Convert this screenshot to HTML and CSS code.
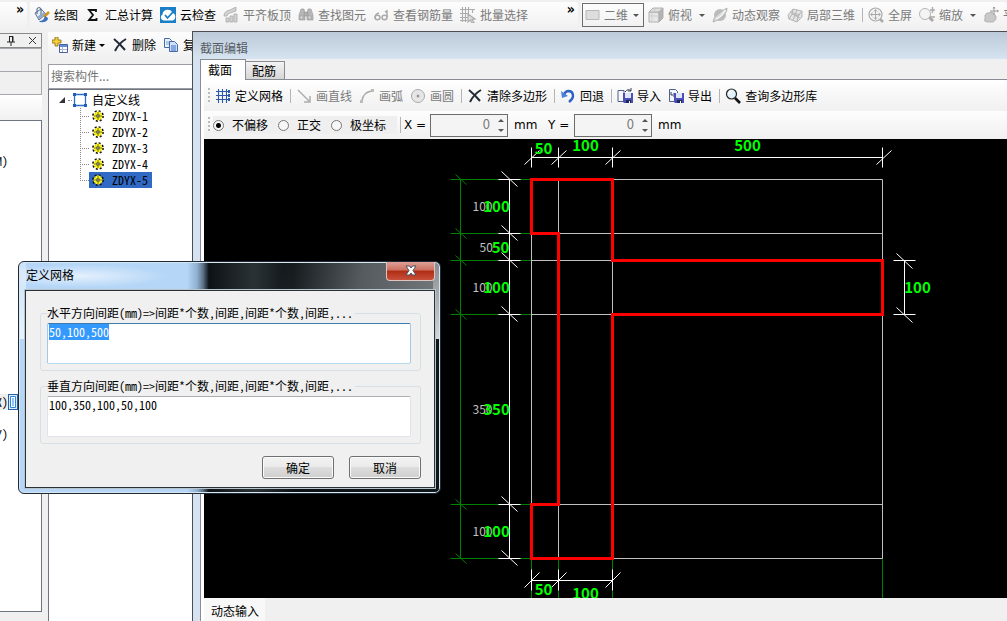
FILE: index.html
```html
<!DOCTYPE html>
<html lang="zh-CN">
<head>
<meta charset="utf-8">
<title>截面编辑</title>
<link rel="stylesheet" href="styles.css">
</head>
<body>
<svg class="defs" width="0" height="0" aria-hidden="true">
  <defs>
    <symbol id="i-cross" viewBox="0 0 16 16"><path d="M2 2q6 5 11 11" fill="none" stroke="#222b38" stroke-width="2"/><path d="M14 2Q7 6 3 14" fill="none" stroke="#222b38" stroke-width="2"/></symbol>
    <symbol id="i-gear" viewBox="0 0 12 12"><circle cx="6" cy="6" r="5" fill="none" stroke="#111" stroke-width="1.800" stroke-dasharray="2 1.930"/><circle cx="6" cy="6" r="4.400" fill="#fff81c"/><path d="M6 2v8M2 6h8" stroke="#4c4a00" stroke-width=".7"/><path d="M3.500 3.500l5 5M8.500 3.500l-5 5" stroke="#8c8a10" stroke-width=".5"/><circle cx="6" cy="6" r="1.200" fill="#fff" stroke="#111" stroke-width=".8"/></symbol>
    <symbol id="i-disk" viewBox="0 0 10 10"><path d="M0 0h10v10H1L0 9z" fill="#4a50b4"/><path d="M2 0h6v5H2z" fill="#dfe6fa"/><path d="M3 7h5v3H3z" fill="#20265e"/><path d="M6 8h1v2H6z" fill="#fff"/></symbol>
  </defs>
</svg>
<div class="app">
  <header class="topbar">
    <div class="bar bar-overflow"><button class="more" aria-label="更多">»</button></div>
    <div class="bar bar-main">
      <button class="tool"><svg class="icon" viewBox="0 0 16 16"><path d="M1 6l6-4 5 5-7 6z" fill="#e6ecf5" stroke="#5d708c"/><path d="M3 7V1.500l2-1 2 1V8" fill="none" stroke="#44658f"/><path d="M5 12l7-5-2-2-7 5z" fill="#8fa9cc"/><path d="M15 5l-5 5" stroke="#d5951b" stroke-width="2.500"/><path d="M11 9q-1 5-6 5 1 2 5 1 4-1 4-4z" fill="#3d71bd"/></svg><span>绘图</span></button>
      <button class="tool"><svg class="icon" viewBox="0 0 16 16"><path d="M11 5V3H4l4 5-4 5h7.500v-2" fill="none" stroke="#111" stroke-width="1.800"/></svg><span>汇总计算</span></button>
      <button class="tool"><svg class="icon" viewBox="0 0 16 16"><path d="M0 0h16v16H0z" fill="#1b7fc7"/><path d="M3.500 13.500a3.200 3.200 0 0 1-1-6A5.200 5.200 0 0 1 12.500 6a3.900 3.900 0 0 1 0 7.500z" fill="#fff"/><path d="M5 8l2.500 3L13 5" fill="none" stroke="#1b7fc7" stroke-width="1.800"/></svg><span>云检查</span></button>
      <button class="tool" disabled><svg class="icon" viewBox="0 0 16 16" fill="#d2d2d2" stroke="#aaa" stroke-width=".8"><path d="M1 9q0-5 6-6l6-3v4L7 6Q4 7 4 9zM3 15v-4h3v4zM7 15V9h3v6zM11 15V7h3v8z"/></svg><span>平齐板顶</span></button>
      <button class="tool" disabled><svg class="icon" viewBox="0 0 16 16" fill="#b8b8b8" stroke="#999" stroke-width=".6"><path d="M3 2h3l1 5v6H1V8zM10 2h3l2 6v5H9V7zM6 5h4v4H6z"/><path d="M2 9h3v3H2zM10 9h3v3h-3z" fill="#ddd"/></svg><span>查找图元</span></button>
      <button class="tool" disabled><svg class="icon" viewBox="0 0 16 16" fill="none" stroke="#aaa" stroke-width="1.500"><path d="M2 11q0-4 4-5M14 10V4l-2 1"/><ellipse cx="4.500" cy="10.500" rx="2.500" ry="2.200"/><ellipse cx="11.500" cy="10.500" rx="2.500" ry="2.200"/></svg><span>查看钢筋量</span></button>
      <button class="tool" disabled><svg class="icon" viewBox="0 0 16 16" fill="none" stroke="#ababab" stroke-width="1.100"><path d="M2.500 0v15M5.500 0v15M8.500 0v6M0 2.500h15M0 6.500h9M0 10.500h8M0 13.500h7M12.500 2v4"/><path d="M8 7l7 5-3 .500 2 3-2 .5-1.500-3L8 15z" fill="#ddd"/></svg><span>批量选择</span></button>
      <button class="more more-end" aria-label="更多">»</button>
    </div>
    <div class="bar bar-view">
      <label class="combo"><svg class="icon" viewBox="0 0 16 16"><path d="M1 3.500h13v9H1z" fill="#ddd" stroke="#b8b8b8"/></svg><select aria-label="视图模式" disabled><option>二维</option></select><i class="caret"></i></label>
      <button class="tool" disabled><svg class="icon" viewBox="0 0 16 16" stroke="#aaa" stroke-width=".9"><path d="M1 5h10v10H1z" fill="#e6e6e6"/><path d="M1 5l4-4h10l-4 4z" fill="#ddd"/><path d="M11 5l4-4v10l-4 4z" fill="#b4b4b4"/><path d="M4 5v10M1 9h10M8 2L4 5" fill="none" stroke="#ccc"/></svg><span>俯视</span></button>
      <i class="caret"></i>
      <button class="tool" disabled><svg class="icon" viewBox="0 0 16 16"><circle cx="8" cy="8" r="6" fill="#bcbcbc"/><path d="M1 15q0-4 5-8t9-6q1 3-4 8t-10 6z" fill="#d8d8d8" stroke="#aaa" stroke-width=".8"/><path d="M4 12q6-2 9-9" fill="none" stroke="#f2f2f2" stroke-width="1.500"/></svg><span>动态观察</span></button>
      <button class="tool" disabled><svg class="icon" viewBox="0 0 16 16" fill="#e4e4e4" stroke="#b5b5b5"><path d="M1 8l5-6 9 2v6l-5 5-8-3z"/><path d="M6 2l-1 5 6 2 4-5M5 7l-3 5M11 9l-1 6M10 3l-2 5-2 5M3 5l10 3M13 11L7 8" fill="none"/></svg><span>局部三维</span></button>
      <i class="sep"></i>
      <button class="tool" disabled><svg class="icon" viewBox="0 0 16 16"><path d="M11 11l4 4" stroke="#aaa" stroke-width="2.500"/><circle cx="7.500" cy="7.500" r="6.500" fill="#f2f2f2" stroke="#aaa" stroke-width="1.200"/><path d="M7.500 3v9M3 7.500h9M6 4.500l1.500-2 1.500 2M6 10.500l1.500 2 1.500-2M4.500 6l-2 1.500 2 1.500M10.500 6l2 1.500-2 1.500" fill="none" stroke="#aaa"/></svg><span>全屏</span></button>
      <button class="tool" disabled><svg class="icon" viewBox="0 0 16 16"><path d="M10 10l4 4" stroke="#aaa" stroke-width="3"/><circle cx="6" cy="7" r="5.500" fill="#f4f4f4" stroke="#b4b4b4"/><path d="M11 3h5M13.500 0v6M11 10h5" stroke="#aaa" stroke-width="1.400"/></svg><span>缩放</span></button>
      <i class="caret"></i>
      <button class="tool" disabled><svg class="icon" viewBox="0 0 16 16"><path d="M2 8q2-3 4-2 2-2 4 0l3 3q1 4-3 6H4q-4-1-2-3z" fill="#c8c8c8" stroke="#aaa" stroke-width=".8"/><path d="M11 0v8M7 4h8M10 1.500L11 0l1 1.500M14 3l1.500 1L14 5" fill="none" stroke="#999"/></svg><span>平移</span></button>
    </div>
  </header>

  <div class="work">
    <aside class="dock">
      <div class="dock-head"><svg class="pin" viewBox="0 0 8 10"><path d="M2 .500h4v5M2.500 0v6M5.500 0v6M0 6h8M4 6v4" fill="none" stroke="#222"/></svg><svg class="close-s" viewBox="0 0 9 9"><path d="M1 1l7 7M8 1L1 8" stroke="#333"/></svg></div>
      <div class="dock-row"></div>
      <div class="dock-row"></div>
      <div class="dock-row dock-light"></div>
      <div class="dock-list">
        <div class="cut"><span>(M)</span></div>
        <div class="cut cut-x"><span>(X)</span><button class="mini" aria-label="选项"><svg viewBox="0 0 8 14"><path d="M1.500 1.500h5v11h-5z" fill="#fff" stroke="#2b86dd"/><path d="M3 4h2M3 6h2M3 8h2M3 10h2" stroke="#2b86dd"/></svg></button></div>
        <div class="cut"><span>(Y)</span></div>
      </div>
    </aside>

    <section class="parts">
      <div class="bar parts-bar">
        <button class="tool"><svg class="icon" viewBox="0 0 16 16"><path d="M3 0h3v3h3v3H6v3H3V6H0V3h3z" fill="#f4cf3a" stroke="#8b6a10" stroke-width=".8"/><path d="M7.500 7.500h8v8h-8z" fill="#fff" stroke="#4a5f9c"/><path d="M8 8h7v2H8z" fill="#5c8edb"/><path d="M8 12.500h7M10.500 10v5" stroke="#a9b8d8"/></svg><span>新建</span></button>
        <i class="caret caret-new"></i>
        <button class="tool"><svg class="icon"><use href="#i-cross"/></svg><span>删除</span></button>
        <button class="tool"><svg class="icon" viewBox="0 0 16 16" fill="#e8f0fc" stroke="#4668a8"><path d="M1.500 1.500h5l2 2v7h-7z"/><path d="M3 5h4M3 7h4" stroke="#7f9bd0"/><path d="M6.500 4.500h5l3 3v7h-8z" fill="#cfe0fa"/><path d="M8 9h5M8 11h5M8 13h5" stroke="#3a6fc4"/></svg><span>复制</span></button>
      </div>
      <input class="search" type="text" placeholder="搜索构件..." aria-label="搜索构件">
      <div class="tree">
        <div class="root"><svg class="tri" viewBox="0 0 6 6"><path d="M6 0v6H0z" fill="#333"/></svg><i class="dots"></i><svg class="icon" viewBox="0 0 16 16"><path d="M2.500 2.500h11v11h-11z" fill="#fff" stroke="#2f6fc8" stroke-width="1.300"/><path d="M1 1h3v3H1zM12 1h3v3h-3zM1 12h3v3H1zM12 12h3v3h-3z" fill="#1f5cb8"/></svg><span>自定义线</span></div>
        <ul>
          <li><button class="node"><svg><use href="#i-gear"/></svg>ZDYX-1</button></li>
          <li><button class="node"><svg><use href="#i-gear"/></svg>ZDYX-2</button></li>
          <li><button class="node"><svg><use href="#i-gear"/></svg>ZDYX-3</button></li>
          <li><button class="node"><svg><use href="#i-gear"/></svg>ZDYX-4</button></li>
          <li><button class="node chosen"><svg><use href="#i-gear"/></svg>ZDYX-5</button></li>
        </ul>
      </div>
    </section>

    <main class="editor">
      <h1 class="editor-title">截面编辑</h1>
      <div class="editor-body">
        <div class="tabs"><button class="tab active">截面</button><button class="tab">配筋</button></div>
        <div class="page">
          <div class="bar edit-bar">
            <i class="grip"></i>
            <button class="tool"><svg class="icon" viewBox="0 0 16 16"><path d="M3.500 1v14M7.500 1v14M11.500 1v14M1 3.500h14M1 7.500h14M1 11.500h14" stroke="#2c5aa8" stroke-width="1.100"/><path d="M13 2h2v3h-2zM13 6h2v3h-2zM13 10h2v3h-2z" fill="#2c5aa8"/></svg><span>定义网格</span></button>
            <i class="sep"></i>
            <button class="tool" disabled><svg class="icon" viewBox="0 0 16 16"><path d="M2 2l11 11M14 8v6H8" fill="none" stroke="#aaa" stroke-width="1.400"/></svg><span>画直线</span></button>
            <button class="tool" disabled><svg class="icon" viewBox="0 0 16 16"><path d="M3 13Q4 4 13 3" fill="none" stroke="#aaa" stroke-width="1.400"/><path d="M1 12h3v3H1zM12 1h3v3h-3z" fill="#bbb"/></svg><span>画弧</span></button>
            <button class="tool" disabled><svg class="icon" viewBox="0 0 16 16"><circle cx="8" cy="8" r="6.500" fill="#e6e6e6" stroke="#aaa"/><circle cx="8" cy="8" r="1.500" fill="#999"/></svg><span>画圆</span></button>
            <i class="sep"></i>
            <button class="tool"><svg class="icon"><use href="#i-cross"/></svg><span>清除多边形</span></button>
            <i class="sep"></i>
            <button class="tool"><svg class="icon" viewBox="0 0 16 16"><path d="M4 7q1-4 5-4 4 .5 4 5 0 3-4 6" fill="none" stroke="#2f62c4" stroke-width="2.400"/><path d="M1 3l1 7 6-2z" fill="#4b82dc"/></svg><span>回退</span></button>
            <i class="sep"></i>
            <button class="tool"><svg class="icon" viewBox="0 0 16 16"><path d="M1 2.500h6v11H1z" fill="#f5f8ff" stroke="#50608c"/><path d="M8 4q3-4 6-1M14 0v3h-3" fill="none" stroke="#333d55"/><use href="#i-disk" x="6" y="5" width="10" height="10"/></svg><span>导入</span></button>
            <button class="tool"><svg class="icon" viewBox="0 0 16 16"><path d="M1.500 1.500h6l2 2v10h-8z" fill="#f5f8ff" stroke="#50608c"/><path d="M3 4v3h4M5.500 5L7.500 7l-2 2" fill="none" stroke="#333d55"/><use href="#i-disk" x="6" y="5" width="10" height="10"/></svg><span>导出</span></button>
            <i class="sep"></i>
            <button class="tool"><svg class="icon" viewBox="0 0 16 16"><path d="M10 10l5 5" stroke="#111" stroke-width="2.600"/><circle cx="6.500" cy="6" r="5" fill="#dff1fb" stroke="#222" stroke-width="1.200"/><path d="M4 6q0-2 2-3" fill="none" stroke="#fff" stroke-width="1.500"/></svg><span>查询多边形库</span></button>
          </div>
          <form class="bar offset-bar">
            <i class="grip"></i>
            <div class="radios">
              <label><input type="radio" name="mode" checked>不偏移</label>
              <label><input type="radio" name="mode">正交</label>
              <label><input type="radio" name="mode">极坐标</label>
            </div>
            <i class="sep"></i>
            <label class="axis" for="off-x">X =</label>
            <span class="spin"><input id="off-x" type="text" value="0"><span class="steps"><button type="button" aria-label="增加 X"></button><button type="button" class="down" aria-label="减少 X"></button></span></span>
            <span class="unit">mm</span>
            <label class="axis" for="off-y">Y =</label>
            <span class="spin"><input id="off-y" type="text" value="0"><span class="steps"><button type="button" aria-label="增加 Y"></button><button type="button" class="down" aria-label="减少 Y"></button></span></span>
            <span class="unit">mm</span>
          </form>
          <div class="canvas">
            <svg class="drawing" role="img" aria-label="截面网格">
              <g transform="translate(-203.5 -138.5)" fill="none">
                <path stroke="#008000" d="M460 179V558M450 179H531M450 233H531M450 260H531M450 314H531M450 504H531M450 558H531M531 558V600M558 558V600M612 558V600M882 558V600M455 174l11 10M455 228l11 10M455 255l11 10M455 309l11 10M455 499l11 10M455 553l11 10"/>
                <path stroke="#c0c0c0" d="M531 179H882V558H531ZM531 233H882M531 260H882M531 314H882M531 504H882M558 179V558M612 179V558"/>
                <path stroke="#fff" d="M531 157H882M531 147v20M558 147v20M612 147v20M882 147v20M524 164l15-14M551 164l15-14M605 164l15-14M876 164l15-14M531 580H612M531 569v21M558 569v21M612 569v21M524 587l15-15M551 587l15-15M605 587l15-15M509 179V558M498 179h22M498 233h22M498 260h22M498 314h22M498 504h22M498 558h22M501 171l16 15M501 225l16 15M501 252l16 15M501 306l16 15M501 496l16 15M501 550l16 15M904 260V314M893 260h22M893 314h22M896 253l16 15M896 307l16 15"/>
                <path stroke="#f00" stroke-width="3" d="M531 179H612V260H882V314H612V558H531V504H558V233H531Z"/>
                <g class="minor"><text x="472" y="210">100</text><text x="479" y="251">50</text><text x="472" y="291">100</text><text x="472" y="413">350</text><text x="472" y="535">100</text></g>
                <g class="major"><text x="543" y="153">50</text><text x="585" y="150">100</text><text x="747" y="150">500</text><text x="496" y="211">100</text><text x="500" y="252">50</text><text x="496" y="292">100</text><text x="496" y="414">350</text><text x="496" y="536">100</text><text x="917" y="292">100</text><text x="543" y="594">50</text><text x="585" y="598">100</text></g>
              </g>
            </svg>
          </div>
          <footer class="status"><button class="dynamic">动态输入</button></footer>
        </div>
      </div>
    </main>
  </div>
</div>

<div class="dialog" role="dialog" aria-labelledby="dlg-title">
  <div class="dialog-head"><h2 id="dlg-title">定义网格</h2><button class="dialog-close" aria-label="关闭"><svg viewBox="0 0 14 12"><path d="M2 1h3.500L7 3l1.500-2H12L9 5.500l3 4.500H8.500L7 8l-1.500 2H2l3-4.500z" fill="#fff" stroke="#4b4f5c"/></svg></button></div>
  <form class="dialog-body">
    <fieldset><legend><label for="h-gap">水平方向间距(mm)=&gt;间距*个数,间距,间距*个数,间距,...</label></legend><textarea id="h-gap" class="current" spellcheck="false">50,100,500</textarea></fieldset>
    <fieldset><legend><label for="v-gap">垂直方向间距(mm)=&gt;间距*个数,间距,间距*个数,间距,...</label></legend><textarea id="v-gap" spellcheck="false">100,350,100,50,100</textarea></fieldset>
    <div class="actions"><button type="button">确定</button><button type="button">取消</button></div>
  </form>
</div>
<script src="main.js"></script>
</body>
</html>
```
FILE: main.js
```js
const field = document.getElementById('h-gap');
field.focus();
field.select();
```
FILE: styles.css
```css
* { box-sizing: border-box; }
body {
  margin: 0;
  overflow: hidden;
  background: #f0f0f0;
  color: #000;
  font: 12px/16px "Noto Sans CJK SC", "Noto Sans", sans-serif;
}
button, input, select, textarea { font: inherit; color: inherit; margin: 0; }
button { padding: 0; border: 0; background: none; }
i { flex: none; }
svg { display: block; flex: none; }
.defs { position: absolute; }
.app { display: flex; flex-direction: column; height: 100vh; }

/* Toolbars */
.bar {
  display: flex;
  align-items: center;
  gap: 7px;
  padding-bottom: 2px;
  background: linear-gradient(#fdfdfd, #f0f0f0);
  white-space: nowrap;
}
.tool { display: flex; align-items: center; gap: 4px; flex: none; }
.tool:disabled { color: #7a7a7a; }
.icon { width: 16px; height: 16px; }
.sep { width: 1px; height: 14px; margin-right: -2px; background: #b4b4b4; }
.caret { width: 5px; border: solid transparent; border-width: 3px 3px 0; border-top-color: #555; }
.grip { width: 2px; height: 16px; background: repeating-linear-gradient(#bbb 0 2px, transparent 2px 4px); }
.more { align-self: flex-start; font: bold 14px/14px "DejaVu Sans Condensed", "DejaVu Sans", sans-serif; }

.topbar { display: flex; gap: 3px; flex: none; height: 31px; padding-top: 2px; overflow: hidden; }
.topbar .bar { height: 28px; border-radius: 0 3px 3px 0; }
.bar-overflow { width: 27px; flex: none; padding-left: 16px; }
.bar-main { width: 548px; flex: none; padding-left: 4px; }
.more-end { margin: 0 3px 0 auto; }
.bar-view { flex: 1; min-width: 0; overflow: hidden; }
.bar-view .combo { margin: 0 -3px 0 1px; }
.combo { display: flex; align-items: center; gap: 3px; flex: none; width: 62px; height: 24px; padding: 0 4px 0 2px; border: 1px solid #6c6c6c; color: #7a7a7a; }
.combo select { flex: 1; width: 24px; padding: 0; border: 0; background: none; appearance: none; opacity: 1; color: #7a7a7a; }

/* Workspace columns */
.work { display: flex; flex: 1; min-height: 0; }
.dock { display: flex; flex-direction: column; flex: none; width: 42px; margin-right: 6px; padding-bottom: 9px; }
.dock-head { display: flex; align-items: center; justify-content: flex-end; gap: 13px; height: 15px; margin-top: 2px; padding-right: 4px; border: 1px solid #8a8a8a; border-left: 0; }
.pin { width: 8px; height: 10px; }
.close-s { width: 9px; height: 9px; }
.dock-row { height: 23px; border: 1px solid #a5a8ad; border-left: 0; border-bottom: 0; }
.dock-light { height: 26px; background: linear-gradient(#fff, #f0f0f0); border-right: 0; }
.dock-list { flex: 1; border: 1px solid #6e7480; border-left: 0; background: #fff; }
.cut { display: flex; justify-content: flex-end; width: 8px; height: 16px; margin-top: 32px; overflow: hidden; font: 12px/16px "Noto Sans Mono CJK SC", "Liberation Mono", monospace; }
.cut-x { width: 18px; margin-top: 225px; background: #eee; }
.cut-x + .cut { margin-top: 16px; }
.mini { width: 10px; flex: none; border: 1px solid #245fa8; background: #dcecfc; }
.mini svg { width: 8px; height: 14px; }

.parts { display: flex; flex-direction: column; flex: none; width: 144px; padding-top: 1px; overflow: hidden; }
.parts-bar { height: 28px; padding-left: 4px; }
.parts-bar .caret-new { margin: 0 0 0 -4px; border-top-color: #000; }
.search { width: 100%; height: 25px; margin: 4px 0 0; padding: 0 2px 2px; border: 1px solid #9a9da4; border-right: 0; border-radius: 0; background: #fff; }
.search::placeholder { color: #757575; opacity: 1; }
.tree { flex: 1; border: 1px solid #6e7480; border-width: 1px 0 0 1px; background: #fff; }
.root { display: flex; align-items: center; height: 18px; padding: 2px 0 0 10px; }
.root .tri { width: 6px; height: 6px; }
.dots { width: 4px; margin: 0 1px 0 3px; border-top: 1px dotted #888; }
.root .icon { margin: 0 4px 0 -1px; }
.tree ul { margin: 0 0 0 31px; padding: 0; list-style: none; background: repeating-linear-gradient(#888 0 1px, transparent 1px 2px) 0 0 / 1px 72px no-repeat; }
.tree li { display: flex; align-items: center; height: 16px; }
.tree li::before { content: ""; width: 9px; border-top: 1px dotted #888; }
.node { display: flex; align-items: center; gap: 8px; height: 16px; padding: 0 4px 0 3px; font: 12px/16px "Noto Sans Mono CJK SC", "Liberation Mono", monospace; }
.node svg { width: 12px; height: 12px; }
.chosen { background: #316ac5; }

/* Section editor window */
.editor { display: flex; flex-direction: column; flex: 1; min-width: 0; border: 1px solid #4a4d52; border-width: 1px 0 0 1px; background: #d6e2f0; }
.editor-title { flex: none; height: 27px; margin: 0; padding: 7px 0 0 7px; background: linear-gradient(#bccad9, #d6e4f1); color: #555b63; font: inherit; line-height: 18px; }
.editor-body { display: flex; flex-direction: column; flex: 1; min-height: 0; margin-left: 7px; background: #f0f0f0; }
.tabs { display: flex; align-items: flex-end; flex: none; height: 21px; border-bottom: 1px solid #898c95; }
.tab { width: 39px; height: 18px; padding-right: 2px; border: 1px solid #898c95; border-width: 1px 1px 0 0; background: linear-gradient(#f3f3f3, #d6d6d6); line-height: 17px; }
.tab.active { width: 46px; height: 21px; margin-bottom: -1px; padding: 0 6px 2px 0; border-left-width: 1px; background: #fff; }
.page { display: flex; flex-direction: column; flex: 1; min-height: 0; padding: 3px 0 0 3px; border-left: 1px solid #898c95; background: #fff; }
.edit-bar, .offset-bar { flex: none; height: 28px; padding-left: 4px; }
.edit-bar .grip { margin-right: -2px; }
.offset-bar { gap: 6px; padding-bottom: 0; }
.radios { display: flex; align-items: center; gap: 10px; width: 184px; height: 18px; margin: 0 -3px; background: #efefef; }
.radios label { display: flex; align-items: center; gap: 8px; }
.radios input { appearance: none; width: 11px; height: 11px; border: 1px solid #777; border-radius: 50%; background: #f7f7f7; }
.radios input:checked { background: radial-gradient(#000 0 2px, #f7f7f7 3px); }
.axis, .unit { font: 12px/16px "DejaVu Sans", "Noto Sans", sans-serif; }
.axis { width: 24px; margin-right: -4px; }
.unit { width: 28px; }
.offset-bar .sep { height: 16px; margin: 0 -3px 0 0; }
.spin { display: flex; width: 78px; height: 23px; border: 1px solid #6c6c6c; background: #f4f4f4; }
.spin input { flex: 1; min-width: 0; padding: 0 8px 2px 0; border: 0; background: none; color: #7a7a7a; text-align: right; font-size: 13px; outline: 0; }
.steps { display: flex; flex-direction: column; justify-content: space-between; width: 9px; padding: 4px 4px 4px 0; }
.steps button { border: solid transparent; border-width: 0 3px 3px; border-bottom-color: #555; width: 5px; }
.steps .down { border-width: 3px 3px 0; border-top-color: #555; }
.canvas { flex: 1; min-height: 0; overflow: hidden; background: #000; }
.drawing { width: 100%; height: 100%; }
.drawing text { stroke: none; }
.minor { fill: #c0c0c0; font: 12px "Noto Sans CJK SC", sans-serif; }
.major { fill: #0f0; font: bold 15px "Noto Sans CJK SC", "DejaVu Sans", sans-serif; text-anchor: middle; }
.status { flex: none; height: 23px; background: #f0f0f0; }
.dynamic { height: 23px; padding: 3px 6px 0 7px; background: #f8f8f8; }

/* Grid definition dialog floating over the workspace */
.dialog {
  position: absolute;
  left: 18px;
  top: 261px;
  width: 423px;
  padding: 0 5px 5px 6px;
  border: 1px solid #1e2a36;
  border-radius: 6px;
  box-shadow: inset 0 0 0 1px #d8e6f2;
  background:
    linear-gradient(rgba(220, 224, 226, .2), rgba(220, 224, 226, .9)) right top / 7px 77px no-repeat,
    linear-gradient(rgba(255, 255, 255, .3), rgba(255, 255, 255, .7)) left top / 7px 77px no-repeat,
    linear-gradient(100deg, transparent 260px, #555b5f 340px, #777b7e) left top / 100% 77px no-repeat,
    radial-gradient(ellipse at 60px 14px, rgba(240, 247, 255, .8), transparent 90px) left top / 170px 28px no-repeat,
    linear-gradient(90deg, #b5d6f7 168px, #8fb0cf 178px, #5c7286 184px, #0d1216 190px, #2b3236 235px, #0c1114 275px, #10171b);
}
.dialog-head { display: flex; justify-content: space-between; height: 28px; }
.dialog-head h2 { margin: 0; padding: 5px 0 0 1px; font: inherit; }
.dialog-close { display: flex; align-items: center; justify-content: center; width: 49px; height: 19px; border: 1px solid #e0c4c0; border-top: 0; border-radius: 0 0 4px 4px; background: linear-gradient(#dfa198, #cc6f60 45%, #b02c14 50%, #c8503a); }
.dialog-close svg { width: 14px; height: 12px; }
.dialog-body { padding: 14px 13px 8px 14px; border: 1px solid #2a3238; background: #f0f0f0; outline: 1px solid #b8c4cc; font: 12px/16px "Noto Sans Mono CJK SC", "Noto Sans CJK SC", monospace; }
fieldset { min-width: 0; margin: 0 0 7px; padding: 2px 9px 6px 6px; border: 1px solid #d5dfe5; border-radius: 3px; }
fieldset:nth-of-type(2) { margin-bottom: 12px; }
legend { padding: 0 2px 0 0; }
textarea { display: block; width: 100%; height: 41px; padding: 0 1px; border: 1px solid #e2e3ea; border-top-color: #abadb3; border-radius: 2px; background: #fff; outline: 0; resize: none; overflow: hidden; line-height: 15px; }
textarea.current { border-color: #3d7bad #a4c9e3 #b7d9ed; }
textarea::selection { background: #3399ff; color: #fff; }
.actions { display: flex; justify-content: flex-end; gap: 15px; }
.actions button { width: 72px; height: 23px; border: 1px solid #707070; border-radius: 3px; background: linear-gradient(#f2f2f2, #ebebeb 48%, #dddddd 50%, #cfcfcf); box-shadow: inset 0 0 0 1px #fbfbfb; line-height: 18px; }
```
